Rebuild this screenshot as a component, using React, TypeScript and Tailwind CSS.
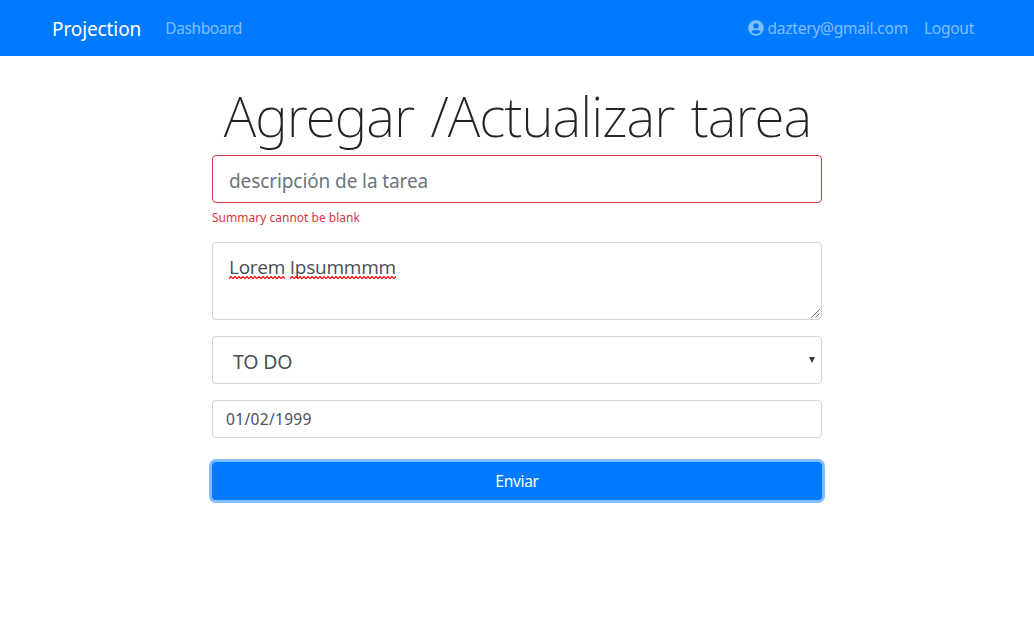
import { FaUserCircle } from "react-icons/fa";

const field =
  "block w-full rounded border border-[#ced4da] bg-white text-[#495057] outline-none";

function Navbar() {
  return (
    <nav className="flex h-14 items-center bg-[#007bff] pr-[60px] pl-[52px] text-[15.5px] leading-6 text-white/50">
      <a className="mr-6 pt-0.5 text-[19px] leading-[30px] tracking-[-0.1px] text-white">
        Projection
      </a>
      <a className="tracking-[-0.38px]">Dashboard</a>
      <div className="ml-auto flex items-center gap-4">
        <a className="flex items-center gap-1 tracking-[-0.23px]">
          <FaUserCircle className="size-4" />
          <span>daztery@gmail.com</span>
        </a>
        <a className="tracking-[-0.25px]">Logout</a>
      </div>
    </nav>
  );
}

function Misspelled({ children }: { children: string }) {
  return (
    <span className="relative">
      {children}
      <svg className="absolute bottom-[1px] left-0 h-[3px] w-full">
        <defs>
          <pattern id="wave" width="4" height="3" patternUnits="userSpaceOnUse">
            <path d="M-1 1.5 0 2.5 2 0.5 4 2.5 5 1.5" fill="none" stroke="#f00" strokeWidth="1.2" />
          </pattern>
        </defs>
        <rect width="100%" height="3" fill="url(#wave)" />
      </svg>
    </span>
  );
}

function TaskForm() {
  return (
    <form className="mx-auto flex w-[610px] flex-col">
      <div className="mb-4">
        <input
          className="block h-12 w-full rounded border border-[#dc3545] px-4 pt-1 text-[19px] tracking-[-0.1px] outline-none placeholder:text-[#6c757d] placeholder:opacity-100"
          placeholder="descripción de la tarea"
        />
        <div className="mt-1 h-[19px] text-[12px] leading-[21px] tracking-[0.01px] text-[#dc3545]">
          Summary cannot be blank
        </div>
      </div>
      <div className={`${field} relative mb-4 h-[78px] px-4 py-[9px] font-['Open_Sans'] text-[19px] leading-[30px] tracking-[-0.25px]`}>
        <Misspelled>Lorem</Misspelled> <Misspelled>Ipsummmm</Misspelled>
        <svg className="absolute right-px bottom-px size-[9px]" viewBox="0 0 9 9" stroke="#555" strokeWidth="0.9" fill="none">
          <path d="M0.5 8.5 8.5 0.5M4.5 8.5 8.5 4.5" />
        </svg>
      </div>
      <div className="relative mb-4">
        <select className={`${field} h-12 appearance-none pt-1 pl-5 text-[19.5px] tracking-[-0.2px]`}>
          <option>TO DO</option>
        </select>
        <svg className="pointer-events-none absolute top-[21px] right-[7px] h-[6px] w-[6px]" viewBox="0 0 6 6" fill="#343a40">
          <path d="M0 0H6L3 6Z" />
        </svg>
      </div>
      <input className={`${field} mb-6 h-[38px] px-[13px] text-[15.5px] tracking-[0.33px]`} defaultValue="01/02/1999" />
      <button
        type="button"
        className="h-[38px] w-full rounded bg-[#007bff] pt-px text-[15.5px] tracking-[-0.3px] text-white shadow-[0_0_0_3px_#80bdff]"
      >
        Enviar
      </button>
    </form>
  );
}

export default function App() {
  return (
    <div className="min-h-screen bg-white font-['Noto_Sans','Open_Sans',sans-serif] text-[#212529]">
      <Navbar />
      <main className="pt-6">
        <h1 className="mb-2 h-[67px] pl-px text-center text-[55px] leading-[72px] font-extralight tracking-[-0.95px] [word-spacing:3px] whitespace-nowrap">
          Agregar /Actualizar tarea
        </h1>
        <TaskForm />
      </main>
    </div>
  );
}
